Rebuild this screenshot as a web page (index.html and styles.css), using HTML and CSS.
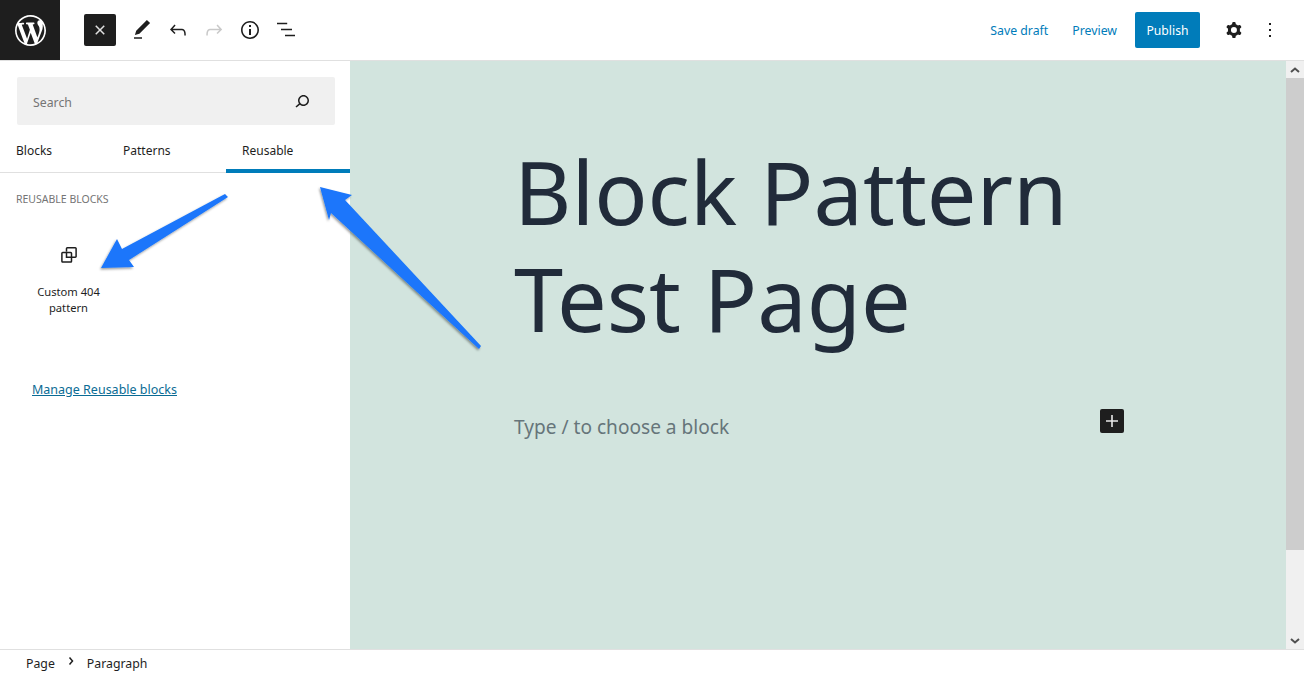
FILE: index.html
```html
<!DOCTYPE html>
<html lang="en">
<head>
    <meta charset="UTF-8">
    <title>Block Pattern Test Page</title>
    <link rel="stylesheet" href="styles.css">
</head>
<body>
    <header class="topbar">
        <div class="topbar-left">
            <a class="wp-logo">
                <svg width="31" height="31" viewBox="0 0 20 20"><path fill="#fff" d="M20 10c0-5.51-4.49-10-10-10C4.480 0 0 4.490 0 10c0 5.520 4.480 10 10 10 5.510 0 10-4.480 10-10zM7.780 15.370L4.370 6.220c.55-.02 1.170-.08 1.170-.08.500-.06.440-1.130-.060-1.110 0 0-1.450.110-2.370.110-.180 0-.370 0-.580-.010C4.120 2.690 6.890 1.060 10 1.060c2.330 0 4.450.870 6.050 2.340-.680-.110-1.650.390-1.650 1.580 0 .740.450 1.360.900 2.100.350.610.550 1.360.550 2.460 0 1.490-1.400 5-1.400 5l-3.030-8.370c.540-.020.820-.170.820-.170.500-.050.440-1.250-.060-1.220 0 0-1.440.120-2.380.120-.870 0-2.330-.120-2.330-.120-.500-.030-.560 1.200-.060 1.220l.920.080 1.260 3.410zM17.410 10c.240-.640.740-1.870.430-4.250.700 1.290 1.050 2.710 1.050 4.250 0 3.290-1.730 6.240-4.400 7.780.970-2.590 1.940-5.200 2.920-7.780zM6.100 18.090C3.120 16.650 1.060 13.530 1.060 10c0-1.300.230-2.480.720-3.590C3.250 10.440 4.670 14.480 6.100 18.090zm4.030-6.640l2.580 6.980c-.860.290-1.750.450-2.710.450-.790 0-1.570-.110-2.290-.330.810-2.380 1.620-4.740 2.420-7.100z"/></svg>
            </a>
            <div class="tools">
                <button class="tool tool-close">
                    <svg width="24" height="24" viewBox="0 0 24 24"><path fill="#e0e0e0" d="M12 13.060l3.712 3.713 1.061-1.06L13.061 12l3.712-3.712-1.06-1.06L12 10.938 8.288 7.227l-1.061 1.06L10.939 12l-3.712 3.712 1.06 1.061L12 13.061z"/></svg>
                </button>
                <button class="tool">
                    <svg width="24" height="24" viewBox="0 0 24 24"><path fill="#1e1e1e" d="M20.100 5.100L16.900 2 6.200 12.700l-1.300 4.400 4.500-1.300L20.100 5.100zM4 20.800h8v-1.500H4v1.500z"/></svg>
                </button>
                <button class="tool">
                    <svg width="24" height="24" viewBox="0 0 24 24"><path fill="#1e1e1e" d="M18.300 11.700c-.6-.6-1.400-.9-2.300-.9H6.700l2.900-3.300-1.100-1-4.500 5L8.500 16l1-1-2.700-2.700H16c.5 0 .9.200 1.300.5 1 1 1 3.400 1 4.500v.3h1.500v-.2c0-1.500 0-4.300-1.500-5.700z"/></svg>
                </button>
                <button class="tool">
                    <svg width="24" height="24" viewBox="0 0 24 24"><path fill="#c9c9c9" d="M15.600 6.500l-1.100 1 2.900 3.300H8c-.9 0-1.700.3-2.300.9-1.400 1.500-1.400 4.200-1.400 5.600v.2h1.500v-.3c0-1.100 0-3.500 1-4.500.3-.3.700-.5 1.300-.5h9.200L14.500 15l1.100 1.100 4.600-4.600-4.600-5z"/></svg>
                </button>
                <button class="tool">
                    <svg width="24" height="24" viewBox="0 0 24 24"><path fill="#1e1e1e" fill-rule="evenodd" d="M12 3c-5 0-9 4-9 9s4 9 9 9 9-4 9-9-4-9-9-9zm0 16.400c-4.100 0-7.400-3.300-7.400-7.400S7.900 4.600 12 4.600s7.400 3.300 7.400 7.400-3.300 7.400-7.400 7.400zM11 17h2v-6h-2v6zm0-8h2V7h-2v2z"/></svg>
                </button>
                <button class="tool">
                    <svg width="24" height="24" viewBox="0 0 24 24"><path fill="#1e1e1e" d="M3 4.800h10.200v1.500H3zm4 6h11v1.500H7zm4 6h10v1.500H11z"/></svg>
                </button>
            </div>
        </div>
        <div class="topbar-right">
            <a class="text-btn">Save draft</a>
            <a class="text-btn">Preview</a>
            <button class="publish">Publish</button>
            <button class="tool tool-settings">
                <svg width="24" height="24" viewBox="0 0 24 24"><path fill="#1e1e1e" fill-rule="evenodd" d="M10.289 4.836A1 1 0 0111.275 4h1.306a1 1 0 01.987.836l.244 1.466c.787.26 1.503.679 2.108 1.218l1.393-.522a1 1 0 011.216.437l.653 1.130a1 1 0 01-.23 1.273l-1.148.944a6.025 6.025 0 010 2.435l1.149.946a1 1 0 01.23 1.272l-.653 1.130a1 1 0 01-1.216.437l-1.394-.522c-.605.54-1.320.958-2.108 1.218l-.244 1.466a1 1 0 01-.987.836h-1.306a1 1 0 01-.986-.836l-.244-1.466a5.995 5.995 0 01-2.108-1.218l-1.394.522a1 1 0 01-1.217-.436l-.653-1.131a1 1 0 01.23-1.272l1.149-.946a6.026 6.026 0 010-2.435l-1.148-.944a1 1 0 01-.23-1.272l.653-1.131a1 1 0 011.217-.437l1.393.522a5.994 5.994 0 012.108-1.218l.244-1.466zM14.929 12a3 3 0 11-6 0 3 3 0 016 0z"/></svg>
            </button>
            <button class="tool tool-more">
                <svg width="24" height="24" viewBox="0 0 24 24"><path fill="#1e1e1e" d="M13 19h-2v-2h2v2zm0-6h-2v-2h2v2zm0-6h-2V5h2v2z"/></svg>
            </button>
        </div>
    </header>

    <div class="main">
        <aside class="inserter">
            <div class="search">
                <span class="search-text">Search</span>
                <svg width="24" height="24" viewBox="0 0 24 24"><path fill="#1e1e1e" d="M13.500 6C10.500 6 8 8.500 8 11.500c0 1.100.3 2.100.9 3l-3.400 3 1 1.100 3.400-2.900c1 .9 2.200 1.400 3.600 1.400 3 0 5.500-2.500 5.500-5.500C19 8.500 16.500 6 13.500 6zm0 9.500c-2.200 0-4-1.800-4-4s1.800-4 4-4 4 1.800 4 4-1.800 4-4 4z"/></svg>
            </div>
            <nav class="tabs">
                <a class="tab tab-blocks">Blocks</a>
                <a class="tab tab-patterns">Patterns</a>
                <a class="tab tab-active">Reusable</a>
            </nav>
            <h2 class="panel-title">REUSABLE BLOCKS</h2>
            <div class="block-item">
                <svg width="24" height="24" viewBox="0 0 24 24"><path fill="none" stroke="#1e1e1e" stroke-width="1.500" d="M9.500 8.500V5.500a.8.800 0 01.8-.8h8a.8.800 0 01.8.800v8a.8.800 0 01-.8.800h-3.800M5.700 9.500h8a.8.800 0 01.8.800v8a.8.800 0 01-.8.800h-8a.8.800 0 01-.8-.8v-8a.8.800 0 01.8-.8zM9.500 9.500v4.800h5"/></svg>
                <span class="block-label">Custom 404 pattern</span>
            </div>
            <a class="manage-link">Manage Reusable blocks</a>
        </aside>

        <section class="canvas">
            <div class="canvas-inner">
                <h1 class="post-title">Block Pattern Test Page</h1>
                <div class="appender">
                    <span class="placeholder">Type / to choose a block</span>
                    <button class="add-block">
                        <svg width="24" height="24" viewBox="0 0 24 24"><path fill="#e8e8e8" d="M18 11.200h-5.200V6h-1.600v5.200H6v1.600h5.200V18h1.600v-5.200H18z"/></svg>
                    </button>
                </div>
            </div>
        </section>

        <div class="scrollbar">
            <span class="scroll-btn">
                <svg width="10" height="6" viewBox="0 0 10 6"><path fill="none" stroke="#505050" stroke-width="2" d="M1 5l4-3.500L9 5"/></svg>
            </span>
            <span class="scroll-thumb"></span>
            <span class="scroll-btn scroll-btn-down">
                <svg width="10" height="6" viewBox="0 0 10 6"><path fill="none" stroke="#505050" stroke-width="2" d="M1 1l4 3.500L9 1"/></svg>
            </span>
        </div>
    </div>

    <footer class="crumbs">
        <span>Page</span>
        <svg width="8" height="10" viewBox="0 0 8 10" class="crumb-sep"><path fill="none" stroke="#1e1e1e" stroke-width="1.500" d="M2.500 1.500L5.500 5l-3 3.500"/></svg>
        <span>Paragraph</span>
    </footer>

    <svg class="arrows" width="1304" height="674" viewBox="0 0 1304 674">
        <defs>
            <filter id="arrowShadow" x="-20%" y="-20%" width="140%" height="140%">
                <feDropShadow dx="-1" dy="1.500" stdDeviation="1" flood-color="#000" flood-opacity=".4"/>
            </filter>
        </defs>
        <path class="arrow" filter="url(#arrowShadow)" d="M225 194L228 197 129 260 134 267 101 268 117 239 122 249z"/>
        <path class="arrow" filter="url(#arrowShadow)" d="M320 187L352 195 345 200 481 346 479 349 331 213 329 220z"/>
    </svg>
</body>
</html>
```

FILE: styles.css
```css
* {
    box-sizing: border-box;
}
html, body {
    margin: 0;
    height: 100%;
    overflow: hidden;
}
body {
    font-family: 'Noto Sans', sans-serif;
    font-size: 12.300px;
    color: #1e1e1e;
    background: #fff;
    display: flex;
    flex-direction: column;
    height: 674px;
    position: relative;
}
button {
    border: none;
    background: none;
    padding: 0;
    font-family: inherit;
}
.topbar {
    height: 61px;
    flex: none;
    display: flex;
    justify-content: space-between;
    border-bottom: 1px solid #e0e0e0;
}
.topbar-left {
    display: flex;
    align-items: center;
}
.wp-logo {
    width: 60px;
    height: 60px;
    background: #1e1e1e;
    display: flex;
    align-items: center;
    justify-content: center;
}
.tools {
    display: flex;
    align-items: center;
    margin-left: 24px;
    gap: 4px;
}
.tool {
    width: 32px;
    height: 32px;
    display: flex;
    align-items: center;
    justify-content: center;
}
.tool-close {
    background: #1e1e1e;
    border-radius: 2px;
    margin-right: 6px;
}
.topbar-right {
    display: flex;
    align-items: center;
    padding-right: 18px;
}
.text-btn {
    color: #007cba;
    margin-right: 24px;
}
.publish {
    width: 65px;
    height: 36px;
    background: #007cba;
    color: #fff;
    font-size: 12.200px;
    border-radius: 2px;
    margin-left: -6px;
    margin-right: 18px;
}
.tool-more {
    margin-left: 4px;
}
.main {
    flex: 1;
    display: flex;
    min-height: 0;
}
.inserter {
    width: 350px;
    flex: none;
    background: #fff;
    display: flex;
    flex-direction: column;
}
.search {
    margin: 16px 15px 0 17px;
    height: 48px;
    background: #f0f0f0;
    display: flex;
    align-items: center;
    justify-content: space-between;
    padding: 0 21px 0 16px;
    border-radius: 2px;
}
.search-text {
    color: #757575;
    padding-top: 2px;
}
.tabs {
    display: flex;
    height: 48px;
    border-bottom: 1px solid #e0e0e0;
    align-items: center;
}
.tab {
    height: 48px;
    line-height: 52px;
    font-size: 12px;
}
.tab-blocks {
    margin-left: 16px;
    width: 107px;
}
.tab-patterns {
    width: 103px;
}
.tab-active {
    width: 124px;
    padding-left: 16px;
    border-bottom: 4px solid #007cba;
}
.panel-title {
    margin: 19px 0 0 16px;
    font-size: 10.500px;
    font-weight: 400;
    line-height: 15px;
    color: #757575;
}
.block-item {
    width: 105px;
    margin: 36px 0 0 16px;
    display: flex;
    flex-direction: column;
    align-items: center;
    text-align: center;
    font-size: 11.200px;
}
.block-label {
    margin-top: 17px;
    line-height: 16px;
    width: 80px;
}
.manage-link {
    margin: 65px 0 0 32px;
    color: #0a6b94;
    text-decoration: underline;
    font-size: 12.500px;
    line-height: 18px;
}
.canvas {
    flex: 1;
    background: #d2e4de;
    min-width: 0;
}
.canvas-inner {
    width: 610px;
    margin-left: 164px;
}
.post-title {
    margin: 77px 0 0;
    font-size: 88.300px;
    font-weight: 400;
    line-height: 107px;
    color: #212b3a;
}
.appender {
    margin-top: 57px;
    display: flex;
    justify-content: space-between;
    align-items: center;
    height: 24px;
}
.placeholder {
    font-size: 19.100px;
    color: #66757a;
    margin-top: 12px;
}
.add-block {
    width: 24px;
    height: 24px;
    background: #1e1e1e;
    border-radius: 2px;
    display: flex;
}
.scrollbar {
    width: 18px;
    flex: none;
    background: #f0f0f0;
    display: flex;
    flex-direction: column;
    align-items: stretch;
}
.scroll-btn {
    height: 17px;
    display: flex;
    align-items: center;
    justify-content: center;
}
.scroll-btn-down {
    margin-top: auto;
}
.scroll-thumb {
    height: 472px;
    background: #cdcdcd;
}
.crumbs {
    height: 25px;
    flex: none;
    border-top: 1px solid #e0e0e0;
    display: flex;
    align-items: center;
    padding: 2px 0 0 26px;
}
.crumb-sep {
    margin: -4px 12px 0 12px;
}
.arrows {
    position: absolute;
    left: 0;
    top: 0;
    pointer-events: none;
}
.arrow {
    fill: #1a76fb;
}
```
